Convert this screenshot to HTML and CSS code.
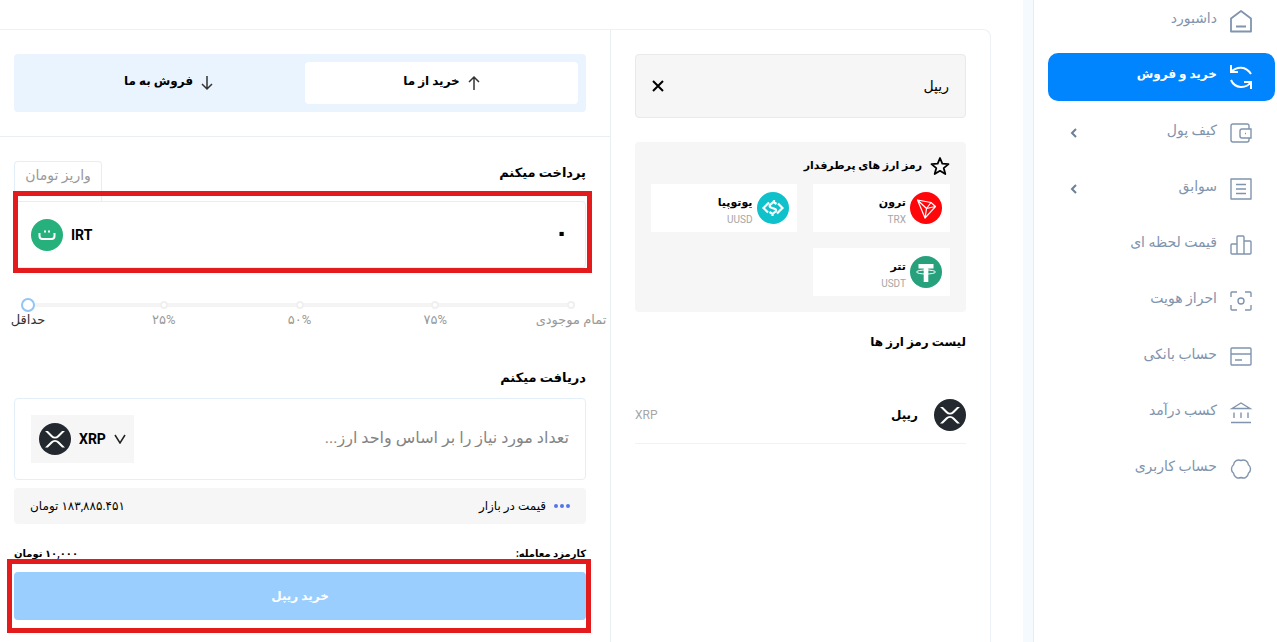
FILE: index.html
```html
<!DOCTYPE html>
<html lang="fa" dir="rtl">
<head>
  <meta charset="utf-8">
  <title>خرید و فروش</title>
  <link rel="stylesheet" href="styles.css">
</head>
<body>
  <!-- shared coin logo -->
  <svg class="defs" width="0" height="0">
    <symbol id="xrp" viewBox="0 0 32 32">
      <circle cx="16" cy="16" r="16" fill="#23292f"/>
      <path d="M23.070 8h2.890l-6.015 5.957a5.621 5.621 0 0 1-7.890 0L6.035 8H8.930l4.570 4.523a3.556 3.556 0 0 0 4.996 0L23.070 8zM8.895 24.563H6l6.055-5.993a5.621 5.621 0 0 1 7.890 0L26 24.562h-2.895L18.500 20a3.556 3.556 0 0 0-4.996 0l-4.610 4.563z" fill="#fff"/>
    </symbol>
  </svg>

  <nav class="sidebar">
    <ul class="menu">
      <li><a href="#" class="menu-item">
        <svg class="icon" viewBox="0 0 24 24"><path d="M2 9.500 12 2l10 7.500V22.500H2zM7 17.500h10" stroke-width="1.800" stroke-linejoin="round"/></svg>
        <span>داشبورد</span>
      </a></li>
      <li><a href="#" class="menu-item active">
        <svg class="icon" viewBox="0 0 24 24"><path d="M2 0v7h7M2 7C8 1 17 1 22 9M22 24v-7h-7M22 17C17 24 6 24 2 15" stroke-width="2"/></svg>
        <span>خرید و فروش</span>
      </a></li>
      <li><a href="#" class="menu-item">
        <svg class="icon" viewBox="0 0 24 24"><path d="M20 8V5q0-2-2-2H4Q2 3 2 5v14q0 2 2 2h14q2 0 2-2v-2M22 8h-9q-2 0-2 2v5q0 2 2 2h9zM16 12.500h1"/></svg>
        <span>کیف پول</span>
        <svg class="arrow" viewBox="0 0 8 12"><path d="M6 2 2 6l4 4"/></svg>
      </a></li>
      <li><a href="#" class="menu-item">
        <svg class="icon" viewBox="0 0 24 24"><path d="M2 2h20v20H2zM7 7.500h10M7 12h10M7 16.500h10" stroke-linejoin="round"/></svg>
        <span>سوابق</span>
        <svg class="arrow" viewBox="0 0 8 12"><path d="M6 2 2 6l4 4"/></svg>
      </a></li>
      <li><a href="#" class="menu-item">
        <svg class="icon" viewBox="0 0 24 24"><path d="M8 11H3q-1 0-1 1v8q0 1 1 1h5V4q0-1 1-1h5q1 0 1 1v17H8M15 8h6q1 0 1 1v11q0 1-1 1h-6"/></svg>
        <span>قیمت لحظه ای</span>
      </a></li>
      <li><a href="#" class="menu-item">
        <svg class="icon" viewBox="0 0 24 24"><path d="M2 8V4q0-1 1-1h5M16 3h5q1 0 1 1v4M22 16v4q0 1-1 1h-5M8 21H3q-1 0-1-1v-4"/><circle cx="12" cy="12" r="3"/></svg>
        <span>احراز هویت</span>
      </a></li>
      <li><a href="#" class="menu-item">
        <svg class="icon" viewBox="0 0 24 24"><rect x="2" y="3" width="20" height="17" rx="1"/><path d="M2 9h20M6 15h7"/></svg>
        <span>حساب بانکی</span>
      </a></li>
      <li><a href="#" class="menu-item">
        <svg class="icon" viewBox="0 0 24 24"><path d="M3 7.500 12 2l9 5.500zM5 11.500V17M12 11.500V17M19 11.500V17M2 21.500h20"/></svg>
        <span>کسب درآمد</span>
      </a></li>
      <li><a href="#" class="menu-item">
        <svg class="icon" viewBox="0 0 24 24"><path d="M12 3.500A5.200 5.200 0 0 1 19.400 7.800 5.200 5.200 0 0 1 19.400 16.200 5.200 5.200 0 0 1 12 20.500 5.200 5.200 0 0 1 4.600 16.200 5.200 5.200 0 0 1 4.600 7.800 5.200 5.200 0 0 1 12 3.500z" stroke-linejoin="round"/></svg>
        <span>حساب کاربری</span>
      </a></li>
    </ul>
  </nav>

  <main class="main">
    <div class="panel">
      <section class="coins">
        <div class="search">
          <input type="text" value="ریپل" aria-label="جستجو">
          <button type="button" aria-label="پاک کردن">
            <svg width="12" height="12" viewBox="0 0 12 12"><path d="M1 1l10 10M11 1L1 11" stroke="#000" stroke-width="2"/></svg>
          </button>
        </div>

        <div class="favorites">
          <h3>
            <svg width="20" height="20" viewBox="0 0 20 20"><path d="M10 2l2.300 5.700 6.200.4-4.800 4 1.600 6L10 14.800l-5.300 3.300 1.600-6-4.800-4 6.200-.4z" fill="none" stroke="#000" stroke-width="1.800" stroke-linejoin="round"/></svg>
            رمز ارز های پرطرفدار
          </h3>
          <div class="favorite-list">
            <button type="button" class="favorite">
              <svg class="coin" viewBox="0 0 32 32"><circle cx="16" cy="16" r="16" fill="#ff060a"/><path d="M7.500 8 21 10.500l4.500 4L15 26zM7.500 8l9 8.500L15 26M21 10.500l-4.500 6 9-2" fill="none" stroke="#fff" stroke-width="1.200" stroke-linejoin="round"/></svg>
              <span class="names"><b>ترون</b><small>TRX</small></span>
            </button>
            <button type="button" class="favorite">
              <svg class="coin" viewBox="0 0 32 32"><circle cx="16" cy="16" r="16" fill="#0fc1ca"/><path d="M12 10.500 6.500 16l4.500 4.500M20 21.500l5.500-5.500-4.500-4.500M19.500 12l-3-2-3.500 3q-1 1.500 1 2.500l4 1.500q2 1 .5 2.500l-3 2.500-3-2M17 8v3M15.500 21v3" fill="none" stroke="#fff" stroke-width="2.200"/></svg>
              <span class="names"><b>یوتوپیا</b><small>UUSD</small></span>
            </button>
            <button type="button" class="favorite">
              <svg class="coin" viewBox="0 0 32 32"><circle cx="16" cy="16" r="16" fill="#26a17b"/><path d="M8.500 8h15v4.500h-5.200V26h-4.600V12.500H8.500z" fill="#fff"/><ellipse cx="16" cy="16" rx="9.500" ry="2" fill="none" stroke="#fff"/></svg>
              <span class="names"><b>تتر</b><small>USDT</small></span>
            </button>
          </div>
        </div>

        <h3 class="list-title">لیست رمز ارز ها</h3>
        <a href="#" class="coin-row">
          <svg class="coin"><use href="#xrp"/></svg>
          <b>ریپل</b>
          <span>XRP</span>
        </a>
      </section>

      <section class="trade">
        <div class="trade-head">
          <div class="tabs">
            <button type="button" class="tab selected">
              <svg width="12" height="16" viewBox="0 0 12 16"><path d="M6 15V2M1 7l5-5 5 5"/></svg>
              <span>خرید از ما</span>
            </button>
            <button type="button" class="tab">
              <svg width="12" height="16" viewBox="0 0 12 16"><path d="M6 1v13M1 9l5 5 5-5"/></svg>
              <span>فروش به ما</span>
            </button>
          </div>
        </div>

        <form class="trade-form">
          <div class="pay-head">
            <label for="pay">پرداخت میکنم</label>
            <button type="button" class="deposit">واریز تومان</button>
          </div>
          <div class="field pay">
            <input type="text" id="pay" value="۰">
            <div class="currency">
              <b>IRT</b>
              <svg class="coin" viewBox="0 0 32 32"><circle cx="16" cy="16" r="16" fill="#26b17c"/><path d="M8.500 14v3q0 3 3 3h9q3 0 3-3v-3" fill="none" stroke="#fff" stroke-width="2"/><path d="M13 12.500h2M17 12.500h2" stroke="#fff" stroke-width="2"/></svg>
            </div>
            <div class="highlight"></div>
          </div>

          <div class="slider" dir="ltr">
            <div class="dots"><i></i><i></i><i></i><i></i><i></i></div>
            <input type="range" min="0" max="100" step="25" value="0" aria-label="درصد موجودی">
          </div>
          <div class="ticks" dir="ltr">
            <span class="current">حداقل</span>
            <span>۲۵%</span>
            <span>۵۰%</span>
            <span>۷۵%</span>
            <span>تمام موجودی</span>
          </div>

          <label class="receive-label" for="receive">دریافت میکنم</label>
          <div class="field receive">
            <input type="text" id="receive" placeholder="تعداد مورد نیاز را بر اساس واحد ارز...">
            <button type="button" class="currency picker">
              <svg width="12" height="10" viewBox="0 0 12 10"><path d="M1 1l5 8 5-8" fill="none" stroke="#222" stroke-width="1.500"/></svg>
              <b>XRP</b>
              <svg class="coin"><use href="#xrp"/></svg>
            </button>
          </div>

          <div class="rate">
            <svg width="16" height="4" viewBox="0 0 16 4"><g fill="#5476e8"><circle cx="2" cy="2" r="2"/><circle cx="8" cy="2" r="2"/><circle cx="14" cy="2" r="2"/></g></svg>
            <span>قیمت در بازار</span>
            <span class="amount">۱۸۳,۸۸۵.۴۵۱ تومان</span>
          </div>
          <div class="fee">
            <span>کارمزد معامله:</span>
            <span>۱۰,۰۰۰ تومان</span>
          </div>
          <div class="submit">
            <button type="submit">خرید ریپل</button>
            <div class="highlight"></div>
          </div>
        </form>
      </section>
    </div>
  </main>
</body>
</html>
```

FILE: styles.css
```css
* {
  box-sizing: border-box;
}

body {
  margin: 0;
  display: flex;
  min-height: 100vh;
  background-color: #f5faff;
  font-family: Roboto, "DejaVu Sans", sans-serif;
  font-size: 14px;
  color: #000;
}

button,
input {
  font: inherit;
  color: inherit;
  border: none;
  background: none;
  padding: 0;
  margin: 0;
}

button {
  cursor: pointer;
}

input {
  outline: none;
  min-width: 0;
}

a {
  color: inherit;
  text-decoration: none;
}

svg {
  flex: none;
}

.defs {
  position: absolute;
}

.coin {
  width: 32px;
  height: 32px;
}

/* sidebar */
.sidebar {
  flex: none;
  width: 244px;
  padding: 0 2px 0 14px;
  background-color: #fff;
  border-left: 1px solid #e3edf5;
}

.menu {
  list-style: none;
  margin: -3px 0 0;
  padding: 0;
  display: flex;
  flex-direction: column;
  gap: 8px;
}

.menu-item {
  display: flex;
  align-items: center;
  gap: 12px;
  height: 48px;
  padding: 0 22px;
  border-radius: 10px;
  color: #8094ae;
}

.menu-item span {
  padding-bottom: 6px;
}

.menu-item.active {
  background-color: #0085ff;
  color: #fff;
  font-size: 12px;
  font-weight: bold;
}

.icon {
  width: 24px;
  height: 24px;
  fill: none;
  stroke: currentColor;
  stroke-width: 1.4;
}

.arrow {
  width: 8px;
  height: 12px;
  margin-right: auto;
  fill: none;
  stroke: #6c7f99;
  stroke-width: 2;
}

/* content */
.main {
  flex: 1;
  min-width: 0;
  display: flex;
  margin-right: 10px;
  padding: 29px 32px 0 0;
  background-color: #fff;
}

.panel {
  flex: 1;
  min-width: 0;
  display: flex;
  border: 1px solid #edf2f7;
  border-width: 1px 1px 0 0;
  border-top-right-radius: 8px;
}

.coins {
  flex: none;
  width: 380px;
  padding: 24px;
  border-left: 1px solid #e9f0f4;
}

.search {
  display: flex;
  align-items: center;
  height: 64px;
  padding: 0 16px;
  background-color: #f6f6f6;
  border: 1px solid #e9e9e9;
  border-radius: 4px;
}

.search input {
  flex: 1;
}

.search button {
  display: flex;
}

h3 {
  margin: 0;
  font-size: 12px;
  line-height: 24px;
}

.favorites {
  margin-top: 24px;
  padding: 12px 16px 16px;
  background-color: #f6f6f6;
  border-radius: 4px;
}

.favorites h3 {
  display: flex;
  align-items: center;
  gap: 8px;
  margin-bottom: 6px;
  font-size: 11px;
}

.favorite-list {
  display: grid;
  grid-template-columns: 138fr 146fr;
  gap: 16px;
}

.favorite {
  display: flex;
  align-items: center;
  gap: 4px;
  height: 48px;
  padding: 0 8px;
  background-color: #fff;
}

.names {
  display: flex;
  flex-direction: column;
  padding-top: 4px;
  text-align: right;
}

.names b {
  font-size: 11px;
  line-height: 20px;
}

.names small {
  font-size: 10px;
  line-height: 14px;
  color: #a6a6a6;
}

.list-title {
  margin-top: 18px;
}

.coin-row {
  display: flex;
  align-items: center;
  gap: 16px;
  height: 58px;
  margin-top: 32px;
  border-bottom: 1px solid #f2f2f2;
  font-size: 12px;
}

.coin-row span {
  margin-right: auto;
  color: #a6a6a6;
}

.trade {
  flex: 1;
  min-width: 0;
}

.trade-head {
  padding: 24px 24px 24px 14px;
  border-bottom: 1px solid #e9f0f4;
}

.tabs {
  display: flex;
  padding: 8px 8px 8px 18px;
  background-color: #eaf4ff;
  border-radius: 4px;
}

.tab {
  flex: 1;
  display: flex;
  align-items: center;
  justify-content: center;
  gap: 8px;
  height: 42px;
  border-radius: 4px;
  font-size: 12px;
  font-weight: bold;
}

.tab span {
  padding-bottom: 4px;
}

.tab svg {
  fill: none;
  stroke: #333;
  stroke-width: 1.5;
}

.tab.selected {
  background-color: #fff;
}

.trade-form {
  padding: 24px 24px 22px 14px;
}

.pay-head {
  display: flex;
  justify-content: space-between;
  height: 40px;
}

.pay-head label,
.receive-label {
  font-size: 13px;
  line-height: 24px;
  font-weight: bold;
}

.deposit {
  width: 88px;
  padding-bottom: 14px;
  border: 1px solid #e3eff8;
  border-bottom: none;
  border-radius: 4px 4px 0 0;
  color: #999;
}

.field {
  position: relative;
  display: flex;
  align-items: center;
  padding: 0 16px;
  border: 1px solid #e3eff8;
  border-radius: 4px;
}

.field input {
  flex: 1;
  padding-bottom: 4px;
}

.pay {
  height: 67px;
}

.pay input {
  font-size: 24px;
  font-weight: bold;
}

.currency {
  display: flex;
  align-items: center;
  gap: 8px;
}

/* red marker frame around a step */
.highlight {
  position: absolute;
  inset: -11px -7px -6px -2px;
  border: 5px solid #e41b1d;
  pointer-events: none;
}

.slider {
  display: grid;
  margin: 30px 8px 0 7px;
}

.dots,
.slider input {
  grid-area: 1 / 1;
}

.dots {
  display: flex;
  justify-content: space-between;
  align-items: center;
  margin: 0 3px;
  background: linear-gradient(#f4f4f4, #f4f4f4) center / 100% 4px no-repeat;
}

.dots i {
  width: 8px;
  height: 8px;
  border: 2px solid #f0f0f0;
  border-radius: 50%;
  background-color: #fff;
}

.slider input {
  appearance: none;
  width: 100%;
  height: 14px;
  z-index: 1;
}

.slider input::-webkit-slider-thumb {
  appearance: none;
  width: 14px;
  height: 14px;
  border: 2px solid #91c5f8;
  border-radius: 50%;
  background-color: #fff;
}

.ticks {
  display: flex;
  justify-content: space-between;
  padding: 0 15px 0 14px;
  font-size: 13px;
  line-height: 16px;
  color: #999;
}

.ticks span {
  display: flex;
  justify-content: center;
  width: 0;
  white-space: nowrap;
}

.ticks .current {
  color: #333;
}

.receive-label {
  display: block;
  margin: 38px 0 8px;
}

.receive {
  height: 82px;
}

.receive input {
  font-size: 16px;
}

.receive input::placeholder {
  color: #858585;
}

.picker {
  height: 48px;
  padding: 0 8px;
  background-color: #f6f6f6;
}

.rate {
  display: flex;
  align-items: center;
  gap: 8px;
  height: 36px;
  margin-top: 8px;
  padding: 0 16px;
  background-color: #f6f6f6;
  border-radius: 4px;
  font-size: 12px;
}

.amount {
  margin-right: auto;
}

.fee {
  display: flex;
  justify-content: space-between;
  margin: 18px 0 6px;
  font-size: 10px;
  line-height: 24px;
  font-weight: bold;
}

.submit {
  position: relative;
}

.submit button {
  display: block;
  width: 100%;
  height: 48px;
  border-radius: 4px;
  background-color: #99ceff;
  color: #fff;
  font-size: 12px;
  font-weight: bold;
}

.submit .highlight {
  inset: -13px -5px -13px -7px;
}
```
